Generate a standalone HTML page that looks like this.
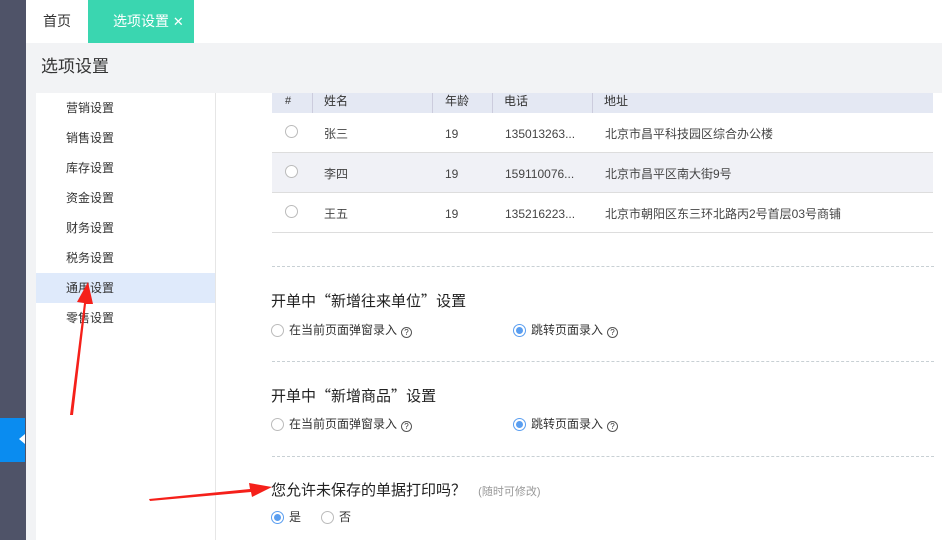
<!DOCTYPE html>
<html><head><meta charset="utf-8"><style>
*{margin:0;padding:0;box-sizing:border-box}
body{width:942px;height:540px;overflow:hidden;background:#fff;position:relative;font-family:"Liberation Sans","Noto Sans CJK SC",sans-serif;color:#333}
.a{position:absolute}
.t{font-size:12px;white-space:nowrap;line-height:16px}
.menu div{position:absolute;left:30px;font-size:12px;color:#333;white-space:nowrap;line-height:16px}
.rad{position:absolute;width:13px;height:13px;border:1px solid #bbb;border-radius:50%;background:#fff}
.rad.on{border-color:#5a9ef0}
.rad.on::after{content:"";position:absolute;left:2px;top:2px;width:7px;height:7px;border-radius:50%;background:#5a9ef0}
.q{display:inline-block;width:11px;height:11px;border:1px solid #555;border-radius:50%;font-size:8px;line-height:9px;text-align:center;margin-left:4px;vertical-align:-1px}
.dash{position:absolute;left:272px;width:662px;border-top:1px dashed #c8d0d4}
.cj{font-family:"Noto Sans CJK SC",sans-serif}
</style></head><body>
<div class="a" style="left:0;top:0;width:26px;height:540px;background:#4f5368"></div>
<div class="a" style="left:0;top:418px;width:25px;height:44px;background:#0a8cf0"></div>
<div class="a" style="left:19px;top:434px;width:0;height:0;border-top:5px solid transparent;border-bottom:5px solid transparent;border-right:6px solid #fff"></div>
<div class="a t" style="left:43px;top:13px;font-size:14px;color:#333">首页</div>
<div class="a" style="left:88px;top:0;width:106px;height:43px;background:#3ad6b0"></div>
<div class="a t" style="left:113px;top:13px;font-size:14px;color:#fff">选项设置 <span style="font-size:13px">✕</span></div>
<div class="a" style="left:26px;top:43px;width:916px;height:50px;background:#f2f3f5"></div>
<div class="a" style="left:26px;top:93px;width:10px;height:447px;background:#f2f3f5"></div>
<div class="a t" style="left:41px;top:57px;font-size:17px;line-height:20px;color:#333">选项设置</div>
<div class="a" style="left:215px;top:93px;width:1px;height:447px;background:#e6e6e6"></div>
<div class="a" style="left:36px;top:273px;width:179px;height:30px;background:#dfeafb"></div>
<div class="a menu" style="left:36px;top:0;width:179px">
<div style="top:100px">营销设置</div><div style="top:130px">销售设置</div><div style="top:160px">库存设置</div><div style="top:190px">资金设置</div><div style="top:220px">财务设置</div><div style="top:250px">税务设置</div><div style="top:280px">通用设置</div><div style="top:310px">零售设置</div>
</div>
<!-- table -->
<div class="a" style="left:272px;top:93px;width:661px;height:20px;background:#e4e8f3"></div>
<div class="a" style="left:312px;top:93px;width:1px;height:20px;background:#ccd"></div>
<div class="a" style="left:432px;top:93px;width:1px;height:20px;background:#ccd"></div>
<div class="a" style="left:492px;top:93px;width:1px;height:20px;background:#ccd"></div>
<div class="a" style="left:592px;top:93px;width:1px;height:20px;background:#ccd"></div>
<div class="a" style="left:272px;top:153px;width:661px;height:40px;background:#f0f1f6"></div>
<div class="a" style="left:272px;top:152px;width:661px;height:1px;background:#ddd"></div>
<div class="a" style="left:272px;top:192px;width:661px;height:1px;background:#ddd"></div>
<div class="a" style="left:272px;top:232px;width:661px;height:1px;background:#ddd"></div>
<div class="a t" style="left:285px;top:93px;font-size:11px">#</div>
<div class="a t" style="left:324px;top:93px">姓名</div>
<div class="a t" style="left:445px;top:93px">年龄</div>
<div class="a t" style="left:504px;top:93px">电话</div>
<div class="a t" style="left:604px;top:93px">地址</div>
<div class="rad" style="left:285px;top:125px"></div>
<div class="rad" style="left:285px;top:165px"></div>
<div class="rad" style="left:285px;top:205px"></div>
<div class="a t" style="left:324px;top:126px;color:#444">张三</div>
<div class="a t" style="left:445px;top:126px;color:#444">19</div>
<div class="a t" style="left:505px;top:126px;color:#444">135013263...</div>
<div class="a t" style="left:605px;top:126px;color:#444">北京市昌平科技园区综合办公楼</div>
<div class="a t" style="left:324px;top:166px;color:#444">李四</div>
<div class="a t" style="left:445px;top:166px;color:#444">19</div>
<div class="a t" style="left:505px;top:166px;color:#444">159110076...</div>
<div class="a t" style="left:605px;top:166px;color:#444">北京市昌平区南大街9号</div>
<div class="a t" style="left:324px;top:206px;color:#444">王五</div>
<div class="a t" style="left:445px;top:206px;color:#444">19</div>
<div class="a t" style="left:505px;top:206px;color:#444">135216223...</div>
<div class="a t" style="left:605px;top:206px;color:#444">北京市朝阳区东三环北路丙2号首层03号商铺</div>
<div class="dash" style="top:266px"></div>
<!-- section 1 -->
<div class="a t" style="left:271px;top:291px;font-size:15px;line-height:20px;color:#222">开单中<span class="cj">“</span>新增往来单位<span class="cj">”</span>设置</div>
<div class="rad" style="left:271px;top:324px"></div>
<div class="a t" style="left:289px;top:322px">在当前页面弹窗录入<span class="q">?</span></div>
<div class="rad on" style="left:513px;top:324px"></div>
<div class="a t" style="left:531px;top:322px">跳转页面录入<span class="q">?</span></div>
<div class="dash" style="top:361px"></div>
<!-- section 2 -->
<div class="a t" style="left:271px;top:386px;font-size:15px;line-height:20px;color:#222">开单中<span class="cj">“</span>新增商品<span class="cj">”</span>设置</div>
<div class="rad" style="left:271px;top:418px"></div>
<div class="a t" style="left:289px;top:416px">在当前页面弹窗录入<span class="q">?</span></div>
<div class="rad on" style="left:513px;top:418px"></div>
<div class="a t" style="left:531px;top:416px">跳转页面录入<span class="q">?</span></div>
<div class="dash" style="top:456px"></div>
<!-- section 3 -->
<div class="a t" style="left:271px;top:481px;font-size:15px;line-height:20px;color:#222">您允许未保存的单据打印吗？ <span style="font-size:11px;color:#999;margin-left:8px">(随时可修改)</span></div>
<div class="rad on" style="left:271px;top:511px"></div>
<div class="a t" style="left:289px;top:509px">是</div>
<div class="rad" style="left:321px;top:511px"></div>
<div class="a t" style="left:339px;top:509px">否</div>
<!-- arrows -->
<svg class="a" style="left:0;top:0" width="942" height="540">
<polygon points="70,415 84,303 77,302 88,282 93,304 86,304 73,415" fill="#f5201a"/>
<polygon points="149,499 250,489 249,483 272,487 252,497 251,492 150,501" fill="#f5201a"/>
</svg>
</body></html>
